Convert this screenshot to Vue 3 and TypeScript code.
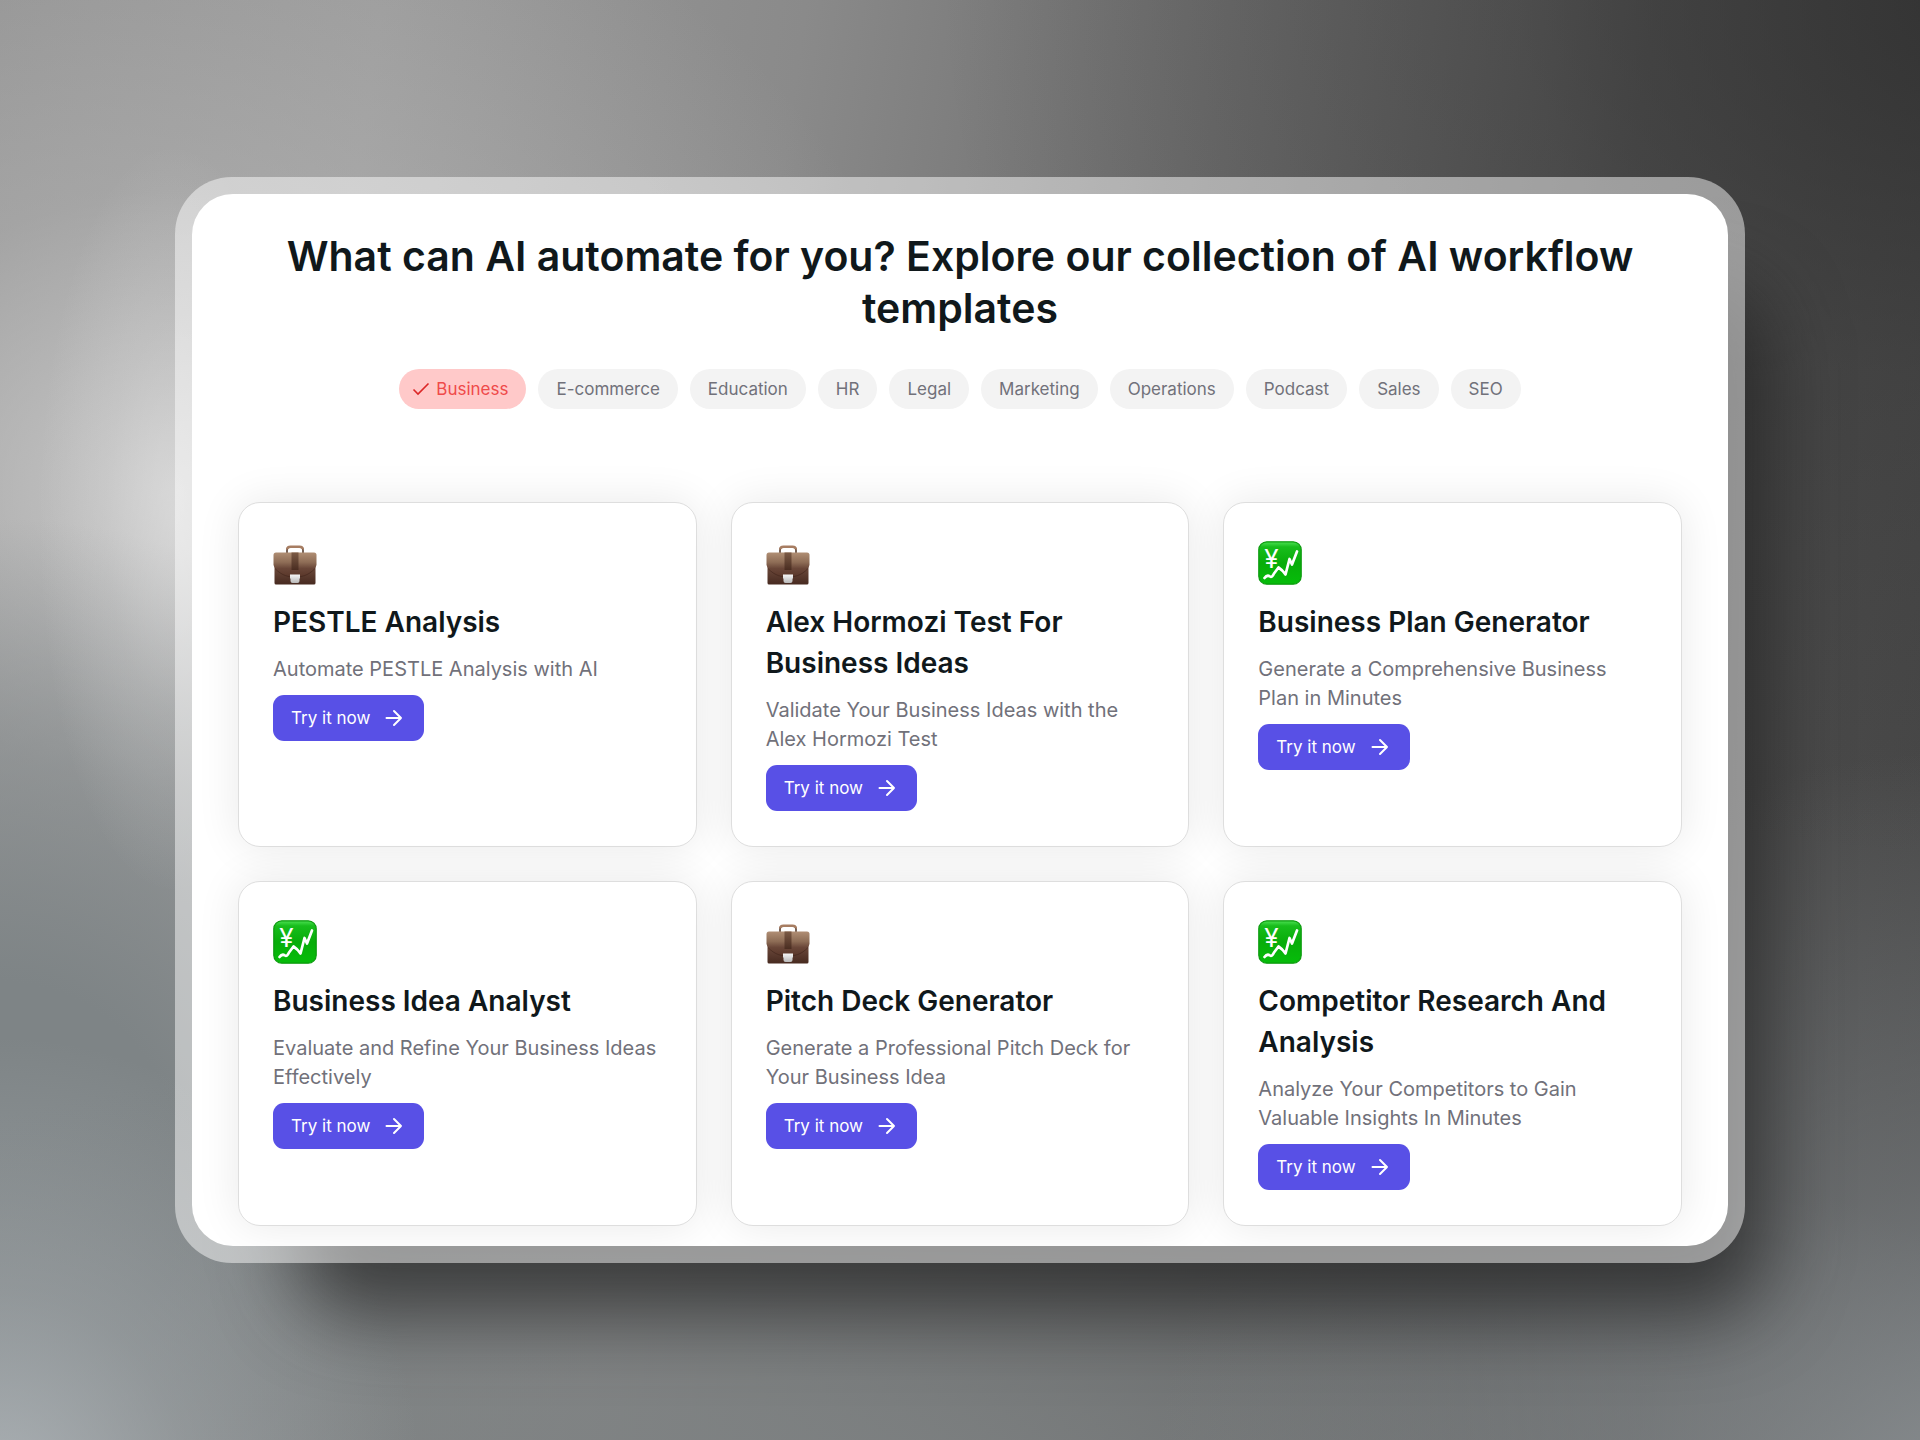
<script setup lang="ts">
import { ref } from 'vue'

type IconName = 'briefcase' | 'chart'

interface Template {
  icon: IconName
  title: string
  description: string
}

const categories: string[] = [
  'Business',
  'E-commerce',
  'Education',
  'HR',
  'Legal',
  'Marketing',
  'Operations',
  'Podcast',
  'Sales',
  'SEO',
]

const selected = ref<string>('Business')

const templates: Template[] = [
  { icon: 'briefcase', title: 'PESTLE Analysis', description: 'Automate PESTLE Analysis with AI' },
  { icon: 'briefcase', title: 'Alex Hormozi Test For Business Ideas', description: 'Validate Your Business Ideas with the Alex Hormozi Test' },
  { icon: 'chart', title: 'Business Plan Generator', description: 'Generate a Comprehensive Business Plan in Minutes' },
  { icon: 'chart', title: 'Business Idea Analyst', description: 'Evaluate and Refine Your Business Ideas Effectively' },
  { icon: 'briefcase', title: 'Pitch Deck Generator', description: 'Generate a Professional Pitch Deck for Your Business Idea' },
  { icon: 'chart', title: 'Competitor Research And Analysis', description: 'Analyze Your Competitors to Gain Valuable Insights In Minutes' },
]
</script>

<template>
  <div class="backdrop">
    <div class="frame">
      <main class="panel">
        <h1 class="heading">What can AI automate for you? Explore our collection of AI workflow templates</h1>

        <nav class="chips" aria-label="Categories">
          <button
            v-for="name in categories"
            :key="name"
            type="button"
            class="chip"
            :class="{ active: name === selected }"
            :aria-pressed="name === selected"
            @click="selected = name"
          >
            <svg v-if="name === selected" class="check" viewBox="0 0 18 18" aria-hidden="true">
              <path d="M1.500 9.500 6 14 16.500 3.500" />
            </svg>
            <span>{{ name }}</span>
          </button>
        </nav>

        <section class="grid">
          <article v-for="item in templates" :key="item.title" class="card">
            <div class="icon">
              <svg v-if="item.icon === 'briefcase'" viewBox="0 0 44 44" aria-hidden="true">
                <defs>
                  <linearGradient id="bag-body" x1="0" y1="0" x2="0" y2="1">
                    <stop offset="0" stop-color="#7a5545" />
                    <stop offset="1" stop-color="#472a20" />
                  </linearGradient>
                  <linearGradient id="bag-flap" x1="0" y1="0" x2="0" y2="1">
                    <stop offset="0" stop-color="#b08e74" />
                    <stop offset="0.4" stop-color="#8e6d56" />
                    <stop offset="0.65" stop-color="#694638" />
                    <stop offset="1" stop-color="#593629" />
                  </linearGradient>
                  <linearGradient id="bag-strap" x1="0" y1="0" x2="0" y2="1">
                    <stop offset="0" stop-color="#7b5a45" />
                    <stop offset="1" stop-color="#4a2d21" />
                  </linearGradient>
                  <linearGradient id="bag-clasp" x1="0" y1="0" x2="0" y2="1">
                    <stop offset="0" stop-color="#f7f7f7" />
                    <stop offset="1" stop-color="#b9b9b9" />
                  </linearGradient>
                </defs>
                <path d="M14 12V9Q14 6 17 6H27Q30 6 30 9V12" fill="none" stroke="#4b3022" stroke-width="1.500" />
                <path d="M13 8.500Q13 4.500 17.500 4.500H26.500Q31 4.500 31 8.500H29Q28.500 7 26.500 7H17.500Q15.500 7 15 8.500Z" fill="#a77d62" />
                <path d="M1.500 20H42.500V42Q42.500 43.500 41 43.500H3Q1.500 43.500 1.500 42Z" fill="url(#bag-body)" />
                <path d="M.5 14Q.5 11.500 3 11.500H41Q43.500 11.500 43.500 14V24Q43 26 41 28.500C35 35 28 36 22 36S9 35 3 28.500Q1 26 .5 24Z" fill="url(#bag-flap)" />
                <path d="M2 27.500C9 35 16 36 22 36S35 35 42 27.500" fill="none" stroke="#3d231a" stroke-width="0.8" opacity="0.7" />
                <path d="M18.500 11.500H25.500V29H18.500Z" fill="url(#bag-strap)" />
                <path d="M17 33.500H27V37.500H26.500V40Q26.500 42 24.500 42H19.500Q17.500 42 17.500 40V37.500H17Z" fill="url(#bag-clasp)" />
              </svg>
              <svg v-else viewBox="0 0 44 44" aria-hidden="true">
                <defs>
                  <linearGradient id="chart-tile" x1="0" y1="0" x2="0" y2="1">
                    <stop offset="0" stop-color="#4be052" />
                    <stop offset="0.12" stop-color="#18bd1c" />
                    <stop offset="0.5" stop-color="#08ad0a" />
                    <stop offset="1" stop-color="#06bd0a" />
                  </linearGradient>
                </defs>
                <rect x="0.800" y="0.800" width="42.400" height="42.400" rx="8" fill="url(#chart-tile)" stroke="#0b9a0d" stroke-width="1.200" />
                <text x="13.500" y="27" text-anchor="middle" class="yen">¥</text>
                <path d="M6.500 37Q9 33.500 12 35.500 14 37 16 32.500L20.500 26.500Q24.500 29 27.500 33.500L31.500 18 34 23.500 39 10.500" fill="none" stroke="#fff" stroke-width="2.700" stroke-linecap="round" stroke-linejoin="round" />
              </svg>
            </div>
            <h2 class="title">{{ item.title }}</h2>
            <p class="description">{{ item.description }}</p>
            <button type="button" class="cta">
              <span>Try it now</span>
              <svg class="arrow" viewBox="0 0 24 24" aria-hidden="true">
                <path d="M4.500 12H19M12 5l7 7-7 7" />
              </svg>
            </button>
          </article>
        </section>
      </main>
    </div>
  </div>
</template>

<style>
body {
  margin: 0;
}
</style>

<style scoped>
.backdrop {
  box-sizing: border-box;
  min-height: 100vh;
  display: flex;
  align-items: center;
  justify-content: center;
  padding: 64px 175px;
  overflow: hidden;
  font-family: Inter, "Liberation Sans", sans-serif;
  background:
    radial-gradient(ellipse 7% 26% at 9% 36%, rgba(232, 232, 232, 0.5), rgba(230, 230, 230, 0.2) 50%, rgba(226, 226, 226, 0) 100%),
    radial-gradient(ellipse 22% 32% at 0% 104%, rgba(176, 182, 186, 0.9), rgba(176, 182, 186, 0.4) 45%, rgba(176, 182, 186, 0) 100%),
    radial-gradient(ellipse 44% 54% at 104% 106%, rgba(140, 145, 148, 1), rgba(136, 141, 144, 0.5) 45%, rgba(136, 141, 144, 0) 100%),
    radial-gradient(ellipse 75% 34% at 40% 106%, rgba(126, 130, 131, 1), rgba(122, 126, 127, 0.6) 50%, rgba(122, 126, 127, 0) 100%),
    radial-gradient(ellipse 32% 46% at 0% 82%, rgba(126, 132, 134, 1) 30%, rgba(126, 132, 134, 0.45) 70%, rgba(126, 132, 134, 0) 100%),
    radial-gradient(ellipse 40% 46% at 9% 34%, rgba(208, 208, 208, 0.85), rgba(190, 190, 190, 0.4) 45%, rgba(180, 180, 180, 0) 100%),
    radial-gradient(ellipse 55% 60% at 104% 0%, rgba(46, 46, 46, 0.85), rgba(48, 48, 48, 0.3) 45%, rgba(48, 48, 48, 0) 100%),
    linear-gradient(98deg, #929292 0%, #9a9a9a 18%, #8a8a8a 38%, #6c6c6c 58%, #515151 78%, #464646 100%);
}

.frame {
  position: relative;
  z-index: 0;
  flex: 1;
  min-width: 0;
  padding: 17px;
}

/* Soft shadow that stays visible through the translucent frame */
.frame::before {
  content: '';
  position: absolute;
  z-index: -2;
  inset: 110px -20px -50px 120px;
  border-radius: 60px;
  background: rgba(28, 28, 28, 0.7);
  filter: blur(40px);
}

.frame::after {
  content: '';
  position: absolute;
  z-index: -1;
  inset: 0;
  border-radius: 57px;
  background: rgba(255, 255, 255, 0.48);
}

.panel {
  box-sizing: border-box;
  padding: 36px 46px 20px;
  border-radius: 41px;
  background: #fff;
  overflow: hidden;
}

.heading {
  margin: 0 0 35px;
  font-size: 41px;
  font-weight: 600;
  line-height: 52px;
  text-align: center;
  color: #10181b;
}

.chips {
  display: flex;
  flex-wrap: wrap;
  justify-content: center;
  gap: 12px;
  margin-bottom: 93px;
}

.chip {
  display: flex;
  align-items: center;
  gap: 6px;
  height: 40px;
  padding: 0 18px;
  border: 0;
  border-radius: 20px;
  background: #f3f3f3;
  font: inherit;
  font-size: 17px;
  color: #71717a;
}

.chip.active {
  padding-left: 13px;
  background: #ffc9c9;
  color: #ef4a4a;
}

.check {
  width: 18px;
  height: 18px;
  fill: none;
  stroke: #dc2626;
  stroke-width: 1.6;
}

.grid {
  display: grid;
  grid-template-columns: repeat(3, minmax(0, 1fr));
  gap: 34px;
}

.card {
  display: flex;
  flex-direction: column;
  align-items: flex-start;
  padding: 34px 34px 35px;
  border: 1px solid #dedede;
  border-radius: 22px;
  background: #fff;
  box-shadow: 0 0 44px rgba(0, 0, 0, 0.09);
}

.icon {
  display: flex;
  align-items: center;
  height: 52px;
  margin-bottom: 13px;
}

.icon svg {
  width: 44px;
  height: 44px;
}

.yen {
  font-size: 26px;
  font-weight: 400;
  fill: #fff;
}

.title {
  margin: 0 0 12px;
  font-size: 28px;
  font-weight: 600;
  line-height: 41px;
  color: #10181b;
}

.description {
  margin: 0 0 11px;
  font-size: 20px;
  line-height: 29px;
  color: #71717a;
}

.cta {
  display: flex;
  align-items: center;
  gap: 12px;
  height: 46px;
  padding: 0 18px;
  border: 0;
  border-radius: 11px;
  background: #5850e6;
  font: inherit;
  font-size: 17px;
  color: #fff;
}

.arrow {
  width: 24px;
  height: 24px;
  fill: none;
  stroke: currentColor;
  stroke-width: 2;
  stroke-linecap: round;
  stroke-linejoin: round;
}
</style>
